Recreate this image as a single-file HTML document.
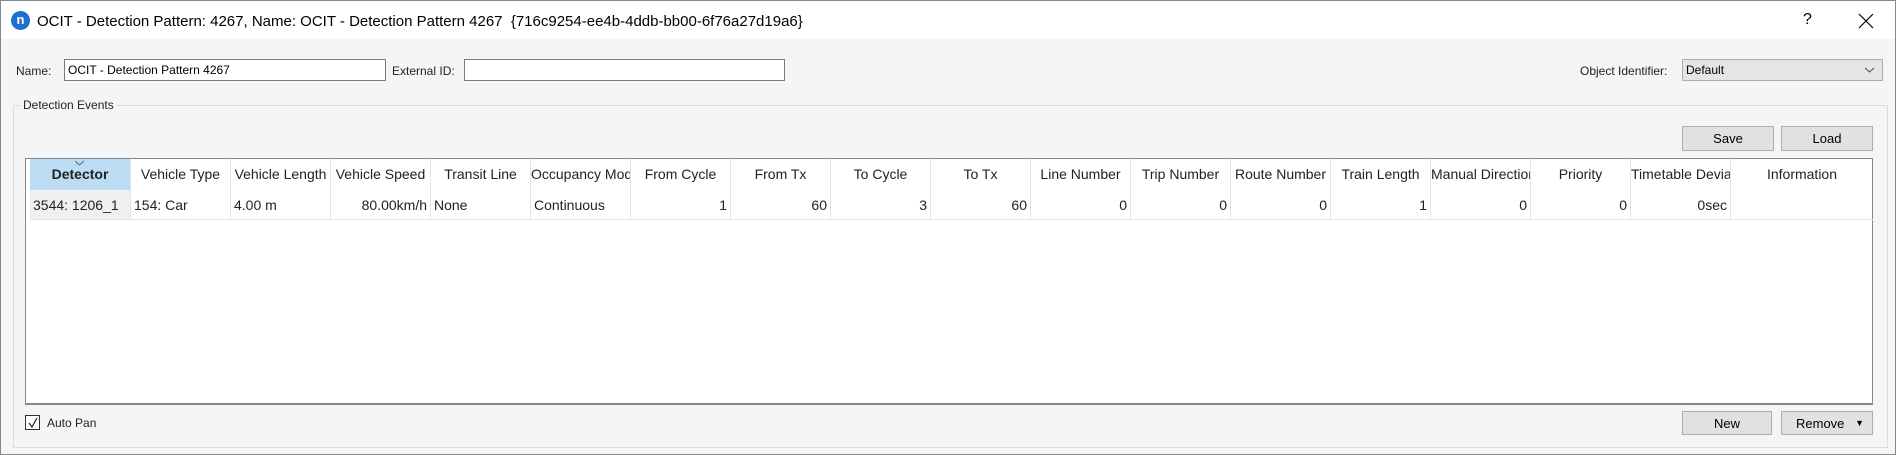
<!DOCTYPE html>
<html><head><style>
*{box-sizing:border-box;margin:0;padding:0}
body{width:1896px;height:455px;overflow:hidden;background:#f0f0f0;font-family:"Liberation Sans",sans-serif;color:#000;position:relative}
.win{position:absolute;left:0;top:0;width:1896px;height:455px;border:1px solid #888;background:#f5f5f5}
.title{position:absolute;left:0;top:0;width:1894px;height:38px;background:#fff}
.abs{position:absolute;white-space:nowrap}
.lbl{font-size:12px;color:#222}
.inp{position:absolute;background:#fff;border:1px solid #7a7a7a;font-size:12px;padding:3px 3px;height:22px}
.btn{position:absolute;background:#e1e1e1;border:1px solid #adadad;font-size:13px;text-align:center;line-height:23px}
.tbl{position:absolute;left:24px;top:157px;width:1848px;height:247px;background:#fff;border:1px solid #828790;border-bottom:2px solid #828790}
.c{position:absolute;height:31px;font-size:14px;line-height:31px;border-right:1px solid #e4e4e4;overflow:hidden;white-space:nowrap;text-align:center;color:#222}
.d{position:absolute;top:31px;height:30px;font-size:14px;line-height:30px;border-right:1px solid #e4e4e4;border-bottom:1px solid #e4e4e4;overflow:hidden;white-space:nowrap;padding:0 3px;color:#222}
</style></head><body>
<div class="win">
<div class="title"></div>
<div class="abs" style="left:10px;top:10px;width:19px;height:19px;border-radius:50%;background:#1e6fd0;color:#fff;font-size:13px;text-align:center;line-height:17px;font-weight:bold">n</div>
<div class="abs" style="left:36px;top:12px;font-size:15px">OCIT - Detection Pattern: 4267, Name: OCIT - Detection Pattern 4267&nbsp; {716c9254-ee4b-4ddb-bb00-6f76a27d19a6}</div>
<div class="abs" style="left:1802px;top:10px;font-size:16px">?</div>
<svg class="abs" style="left:1857px;top:12px" width="16" height="16"><path d="M1 1L15 15M15 1L1 15" stroke="#000" stroke-width="1.2"/></svg>

<div class="abs lbl" style="left:15px;top:63px">Name:</div>
<div class="inp" style="left:63px;top:58px;width:322px">OCIT - Detection Pattern 4267</div>
<div class="abs lbl" style="left:391px;top:63px">External ID:</div>
<div class="inp" style="left:463px;top:58px;width:321px"></div>
<div class="abs lbl" style="left:1579px;top:63px">Object Identifier:</div>
<div class="inp" style="left:1681px;top:58px;width:201px;background:#e5e5e5;border-color:#adadad">Default<svg style="position:absolute;right:8px;top:7px" width="9" height="6"><path d="M0 1L4.5 5L9 1" stroke="#444" fill="none"/></svg></div>

<div class="abs" style="left:12px;top:104px;width:1875px;height:343px;border:1px solid #dcdcdc"></div>
<div class="abs lbl" style="left:20px;top:97px;background:#f5f5f5;padding:0 2px">Detection Events</div>
<div class="btn" style="left:1681px;top:125px;width:92px;height:25px">Save</div>
<div class="btn" style="left:1780px;top:125px;width:92px;height:25px">Load</div>

<div class="tbl">
<div class="c" style="left:4px;width:101px;background:#bcdcf4;font-weight:bold">Detector<svg style="position:absolute;left:45px;top:2px" width="9" height="5"><path d="M0 0L4.5 4L9 0" stroke="#666" fill="none"/></svg></div>
<div class="c" style="left:105px;width:100px">Vehicle Type</div>
<div class="c" style="left:205px;width:100px">Vehicle Length</div>
<div class="c" style="left:305px;width:100px">Vehicle Speed</div>
<div class="c" style="left:405px;width:100px">Transit Line</div>
<div class="c" style="left:505px;width:100px">Occupancy Mode</div>
<div class="c" style="left:605px;width:100px">From Cycle</div>
<div class="c" style="left:705px;width:100px">From Tx</div>
<div class="c" style="left:805px;width:100px">To Cycle</div>
<div class="c" style="left:905px;width:100px">To Tx</div>
<div class="c" style="left:1005px;width:100px">Line Number</div>
<div class="c" style="left:1105px;width:100px">Trip Number</div>
<div class="c" style="left:1205px;width:100px">Route Number</div>
<div class="c" style="left:1305px;width:100px">Train Length</div>
<div class="c" style="left:1405px;width:100px">Manual Direction</div>
<div class="c" style="left:1505px;width:100px">Priority</div>
<div class="c" style="left:1605px;width:100px">Timetable Deviation</div>
<div class="c" style="left:1705px;width:142px;border-right:none">Information</div>

<div class="d" style="left:4px;width:101px;background:#f0f0f0">3544: 1206_1</div>
<div class="d" style="left:105px;width:100px">154: Car</div>
<div class="d" style="left:205px;width:100px">4.00 m</div>
<div class="d" style="left:305px;width:100px;text-align:right">80.00km/h</div>
<div class="d" style="left:405px;width:100px">None</div>
<div class="d" style="left:505px;width:100px">Continuous</div>
<div class="d" style="left:605px;width:100px;text-align:right">1</div>
<div class="d" style="left:705px;width:100px;text-align:right">60</div>
<div class="d" style="left:805px;width:100px;text-align:right">3</div>
<div class="d" style="left:905px;width:100px;text-align:right">60</div>
<div class="d" style="left:1005px;width:100px;text-align:right">0</div>
<div class="d" style="left:1105px;width:100px;text-align:right">0</div>
<div class="d" style="left:1205px;width:100px;text-align:right">0</div>
<div class="d" style="left:1305px;width:100px;text-align:right">1</div>
<div class="d" style="left:1405px;width:100px;text-align:right">0</div>
<div class="d" style="left:1505px;width:100px;text-align:right">0</div>
<div class="d" style="left:1605px;width:100px;text-align:right">0sec</div>
<div class="d" style="left:1705px;width:142px;border-right:none"></div>
</div>

<div class="abs" style="left:24px;top:414px;width:15px;height:15px;border:1px solid #333;background:#fff"><svg style="position:absolute;left:2px;top:2px" width="10" height="10"><path d="M1 5L4 9L9 0" stroke="#222" fill="none" stroke-width="1.2"/></svg></div>
<div class="abs lbl" style="left:46px;top:415px">Auto Pan</div>
<div class="btn" style="left:1681px;top:410px;width:90px;height:24px">New</div>
<div class="btn" style="left:1780px;top:410px;width:92px;height:24px;text-align:left;padding-left:14px">Remove<span style="position:absolute;right:8px;top:0;font-size:9px">▼</span></div>
</div>
</body></html>
